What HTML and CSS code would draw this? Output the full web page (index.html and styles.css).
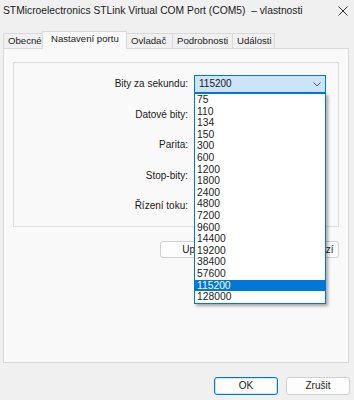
FILE: index.html
```html
<!DOCTYPE html>
<html lang="cs">
<head>
<meta charset="utf-8">
<title>vlastnosti</title>
<link rel="stylesheet" href="styles.css">
</head>
<body>
<div class="window">
  <div class="titlebar">
    <span class="title">STMicroelectronics STLink Virtual COM Port (COM5)&nbsp; – vlastnosti</span>
    <svg class="close" width="10" height="10" viewBox="0 0 10 10"><path d="M0.5 0.5 L9.5 9.5 M9.5 0.5 L0.5 9.5" stroke="#333" stroke-width="1" fill="none"/></svg>
  </div>
  <div class="tabs">
    <div class="tab">Obecné</div>
    <div class="tab active">Nastavení portu</div>
    <div class="tab">Ovladač</div>
    <div class="tab">Podrobnosti</div>
    <div class="tab">Události</div>
  </div>
  <div class="panel">
    <div class="group">
      <div class="label">Bity za sekundu:</div>
      <div class="combo open"><span>115200</span><svg class="chev" width="8" height="5" viewBox="0 0 8 5"><path d="M0.5 0.5 L4 4 L7.5 0.5" stroke="#555" stroke-width="1" fill="none"/></svg></div>
      <div class="label">Datové bity:</div>
      <div class="combo"></div>
      <div class="label">Parita:</div>
      <div class="combo"></div>
      <div class="label">Stop-bity:</div>
      <div class="combo"></div>
      <div class="label">Řízení toku:</div>
      <div class="combo"></div>
    </div>
    <div class="group-buttons">
      <div class="btn adv">Upřesnit...</div>
      <div class="btn def">Obnovit výchozí</div>
    </div>
  </div>
  <div class="footer">
    <div class="btn dlg primary">OK</div>
    <div class="btn dlg">Zrušit</div>
  </div>
  <ul class="dropdown">
    <li>75</li><li>110</li><li>134</li><li>150</li><li>300</li><li>600</li>
    <li>1200</li><li>1800</li><li>2400</li><li>4800</li><li>7200</li><li>9600</li>
    <li>14400</li><li>19200</li><li>38400</li><li>57600</li>
    <li class="sel">115200</li><li>128000</li>
  </ul>
</div>
</body>
</html>
```
FILE: styles.css
```css
* { box-sizing: border-box; }
html, body { margin: 0; padding: 0; }
body {
  width: 354px;
  height: 400px;
  overflow: hidden;
  background: #f0f0f0;
  font-family: "Liberation Sans", Arial, sans-serif;
  font-size: 10px;
  color: #1a1a1a;
}
.window {
  position: relative;
  width: 354px;
  height: 400px;
}
.titlebar {
  height: 31px;
  display: flex;
  align-items: flex-start;
  justify-content: space-between;
  padding: 5px 6px 0 3px;
}
.title {
  font-size: 10.3px;
  line-height: 12px;
  white-space: nowrap;
}
.close { margin-top: 1px; }
.tabs {
  display: flex;
  height: 17px;
  padding-left: 3px;
  align-items: flex-end;
  font-size: 9.6px;
}
.tab {
  height: 15px;
  line-height: 14px;
  padding: 0 0 0 4px;
  border: 1px solid #d9d9d9;
  border-bottom: none;
  background: #f0f0f0;
  margin-right: -1px;
  white-space: nowrap;
}
.tab:nth-child(1) { width: 41px; }
.tab:nth-child(3) { width: 47px; }
.tab:nth-child(4) { width: 61px; }
.tab:nth-child(5) { width: 43px; }
.tab.active {
  position: relative;
  z-index: 1;
  height: 18px;
  margin-bottom: -1px;
  margin-left: -1px;
  margin-right: -1px;
  width: 85px;
  padding: 0 0 0 8px;
  line-height: 14px;
  background: #f9f9f9;
}
.panel {
  margin: 0 5px 0 3px;
  height: 315px;
  border: 1px solid #d9d9d9;
  background: #f9f9f9;
  padding: 13px 9px 0 9px;
}
.group {
  height: 165px;
  border: 1px solid #dcdcdc;
  display: grid;
  grid-template-columns: 174px 132px;
  column-gap: 6px;
  row-gap: 12.5px;
  align-content: start;
  padding-top: 12px;
}
.label {
  text-align: right;
  line-height: 18px;
  height: 18px;
}
.combo {
  height: 18px;
  border: 1px solid #c8c8c8;
  background: #fdfdfd;
  line-height: 16px;
  padding-left: 4px;
  display: flex;
  justify-content: space-between;
  align-items: center;
}
.combo.open {
  background: #cce4f7;
  border-color: #0078d7;
  padding-right: 4px;
}
.chev { margin-top: 1px; }
.group-buttons {
  display: flex;
  justify-content: flex-end;
  gap: 7px;
  margin-top: 14px;
}
.btn {
  height: 17px;
  line-height: 15px;
  border: 1px solid #d0d0d0;
  border-radius: 3px;
  background: #fdfdfd;
  text-align: center;
  white-space: nowrap;
}
.adv { width: 90px; }
.def { width: 82px; }
.footer {
  display: flex;
  justify-content: flex-end;
  gap: 8px;
  padding-right: 4px;
  margin-top: 14px;
}
.btn.dlg {
  width: 64px;
  height: 18px;
  line-height: 16px;
}
.btn.primary {
  border: 1px solid #0078d7;
  box-shadow: inset 0 0 0 1px #cfe3f5;
}
.dropdown {
  position: absolute;
  left: 194px;
  top: 93px;
  width: 132px;
  margin: 0;
  padding: 0;
  list-style: none;
  background: #ffffff;
  border: 1px solid #0078d7;
  box-shadow: 2px 2px 3px rgba(0, 0, 0, 0.35);
  z-index: 5;
}
.dropdown li {
  height: 11.6px;
  line-height: 11.6px;
  padding-left: 2px;
  font-size: 10.3px;
}
.dropdown li.sel {
  background: #0078d7;
  color: #ffffff;
}
```
